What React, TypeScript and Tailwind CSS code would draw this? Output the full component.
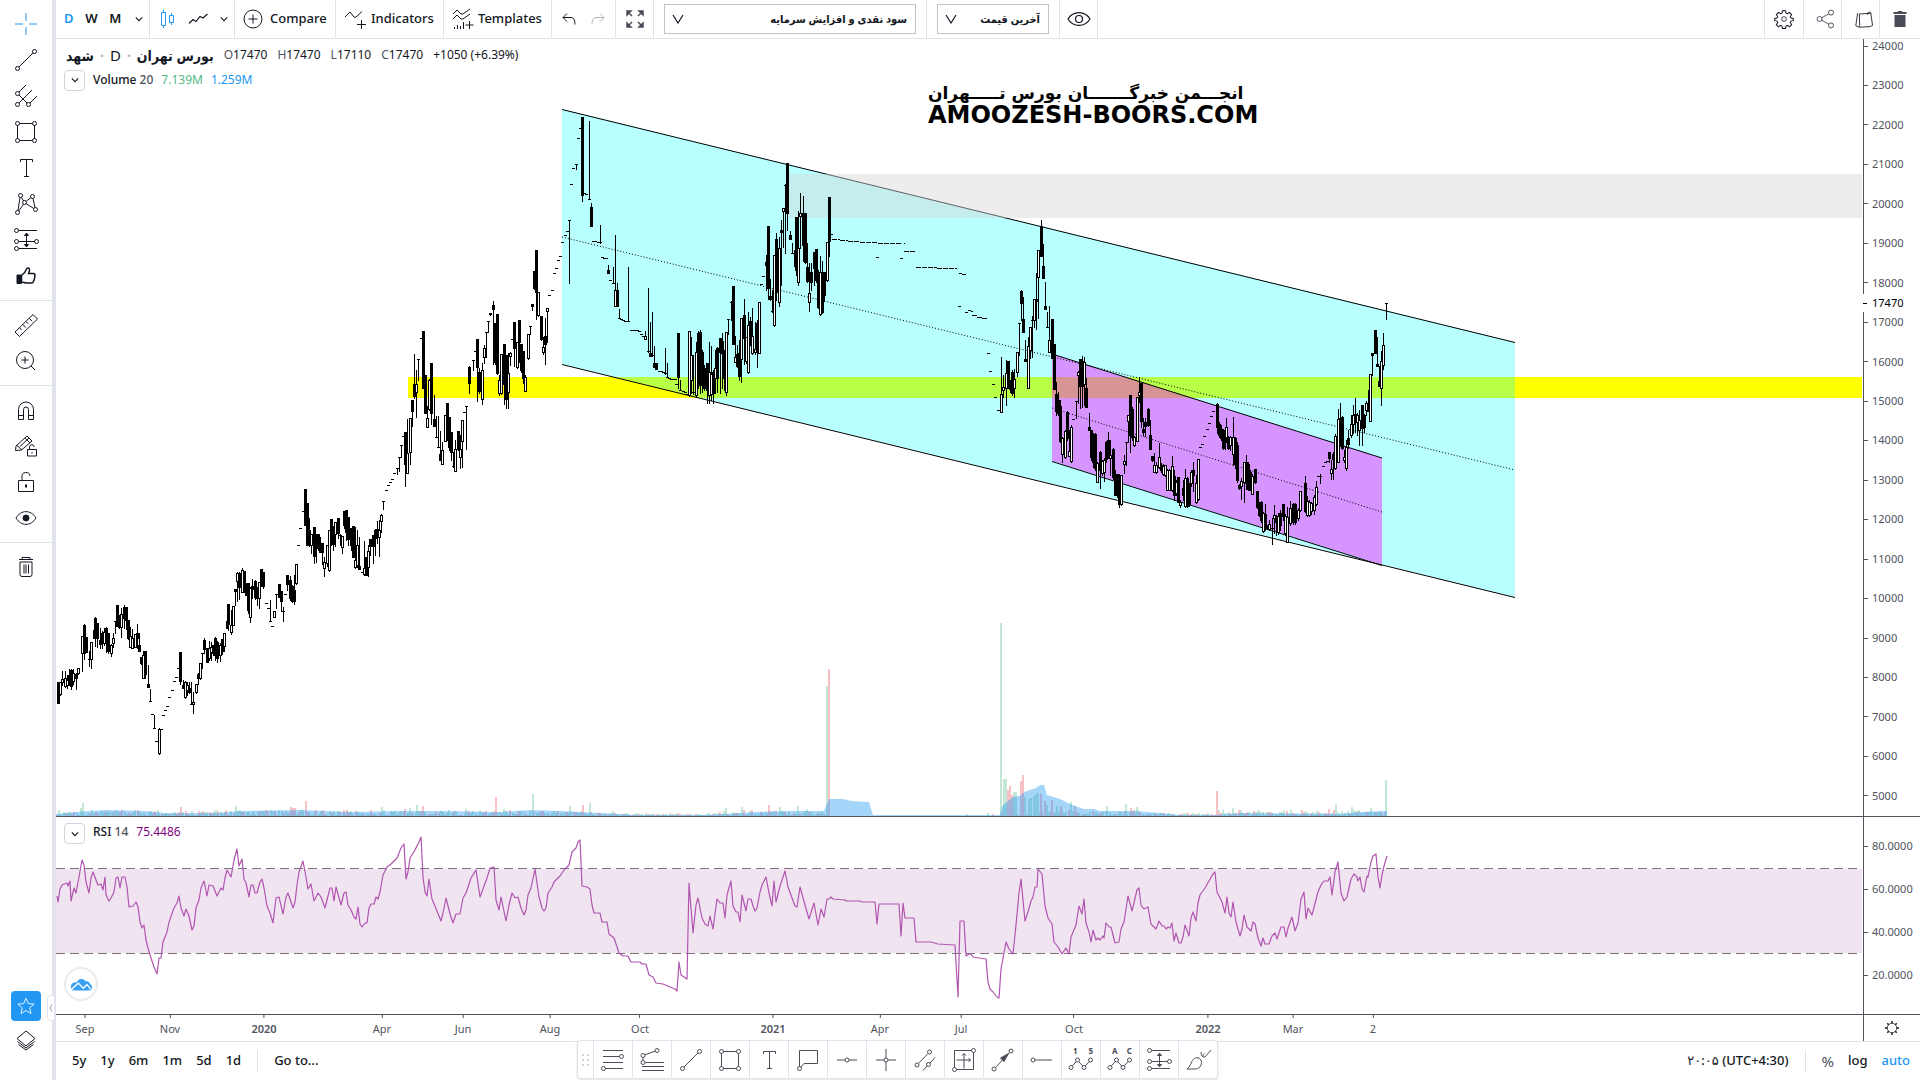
import type { ReactNode } from "react";

// ---------------------------------------------------------------------------
// Series data, in chart units (same units as the viewBox of every pane)
// ---------------------------------------------------------------------------

// x high low top bottom
const FILLED = `58 682 703 682 703|69 669 685 675 680|71 669 689 670 686|76 673 689 674 678|84 624 659 625 653|86 637 652 637 652|94 629 638 630 638|95 617 646 618 638|97 623 647 623 638|100 628 648 640 644|102 631 648 633 643|106 627 652 628 643|108 633 653 633 651|117 605 626 605 626|119 615 628 618 627|124 605 628 607 618|126 607 629 607 620|128 620 639 620 638|137 624 648 633 638|139 633 651 645 651|141 657 664 657 663|145 651 678 651 674|148 665 687 684 687|180 652 684 652 681|183 680 688 685 688|189 682 693 688 692|198 673 684 674 678|204 638 653 640 649|207 648 662 648 662|213 645 655 645 653|215 637 660 638 655|217 641 662 642 658|222 639 654 639 651|227 621 628 621 628|228 604 630 604 624|235 589 605 589 591|239 572 599 573 587|244 571 592 571 592|246 583 595 583 595|248 583 613 583 610|252 579 598 586 589|255 580 599 581 597|257 587 605 587 598|261 569 586 569 585|263 572 588 572 586|279 584 597 584 597|281 591 611 591 601|287 575 590 575 584|290 576 600 580 598|292 585 602 586 601|294 575 604 590 601|305 489 525 489 525|307 503 545 503 545|309 518 546 530 543|314 527 563 527 556|316 534 562 534 548|318 534 550 534 546|320 537 552 543 552|322 543 564 543 552|331 519 545 519 532|333 526 550 528 544|338 518 538 518 533|344 511 528 511 525|346 510 540 510 532|348 517 545 517 539|351 528 550 528 545|353 526 557 526 557|359 537 569 566 569|366 557 575 557 575|370 539 555 539 546|373 535 563 535 546|375 529 555 530 538|377 521 543 529 537|405 432 486 432 464|412 400 426 400 411|414 354 398 384 396|423 331 388 331 388|425 375 413 375 413|431 363 424 363 413|434 395 426 419 426|440 431 460 454 460|447 403 440 403 439|449 417 450 417 447|451 432 460 432 452|458 431 450 431 449|469 366 393 367 383|477 339 401 339 367|479 368 393 372 391|490 313 315 313 314|493 301 364 305 309|495 323 364 323 362|497 314 374 314 373|504 344 404 344 384|506 355 408 355 399|514 322 366 322 348|519 320 362 320 342|521 344 372 344 370|523 351 383 351 378|532 304 310 304 306|534 271 289 271 288|536 250 319 250 292|541 316 340 316 339|545 318 364 336 344|582 117 201 117 195|591 203 226 207 226|608 265 273 270 273|617 283 306 290 306|650 322 356 353 356|654 346 367 363 367|656 363 369 363 369|678 333 388 333 377|698 331 388 333 385|700 330 393 332 370|702 350 392 352 385|704 365 390 368 388|707 363 403 363 390|713 370 403 372 393|717 347 392 348 378|720 338 393 338 352|722 333 388 341 353|724 350 390 352 378|733 286 344 286 344|737 345 367 354 366|739 340 380 353 376|744 299 364 315 338|750 317 345 321 335|757 320 367 323 352|766 255 290 262 265|768 226 299 226 288|770 279 300 296 299|776 233 300 239 292|781 220 285 230 232|787 163 230 163 213|790 231 239 235 239|795 245 270 250 266|796 217 275 217 270|803 196 261 213 245|805 213 263 213 262|807 243 282 267 281|811 263 290 272 282|814 252 285 252 268|816 249 282 249 280|818 270 308 276 307|822 261 313 272 312|824 272 301 272 295|829 197 256 197 241|1008 361 388 361 388|1010 380 392 380 389|1012 370 395 372 393|1021 290 320 291 303|1023 297 332 319 332|1025 340 361 359 361|1036 273 329 299 301|1041 220 256 226 256|1043 244 278 266 278|1045 282 309 306 309|1052 319 358 319 358|1054 344 389 344 389|1056 382 415 394 411|1058 392 415 400 413|1060 400 442 406 441|1067 411 440 412 438|1080 359 408 359 386|1082 356 407 361 386|1086 378 407 388 407|1089 413 430 427 430|1091 430 460 430 457|1093 433 467 438 462|1095 433 470 434 468|1100 451 488 452 470|1106 441 462 442 459|1108 432 458 440 456|1113 448 479 449 477|1115 470 495 475 495|1117 474 497 474 494|1119 474 507 476 504|1130 395 452 395 435|1132 407 440 409 437|1141 383 427 383 421|1143 418 435 429 432|1145 418 436 422 426|1148 408 426 409 425|1150 420 449 435 449|1152 456 461 456 460|1161 463 472 465 470|1174 470 500 476 495|1178 477 502 477 502|1183 480 500 488 495|1187 477 507 478 506|1189 483 506 484 504|1193 462 491 470 475|1217 403 433 404 427|1219 422 437 424 435|1221 425 440 429 438|1223 429 449 430 448|1225 428 449 430 442|1228 436 449 437 448|1235 437 468 438 464|1237 442 482 445 480|1239 484 489 485 488|1246 455 489 462 483|1248 462 490 464 489|1250 470 490 472 490|1255 469 483 469 482|1257 491 508 491 507|1259 502 516 506 515|1261 501 522 502 520|1265 504 530 514 528|1267 525 529 526 528|1276 515 535 518 522|1280 510 530 513 525|1283 504 520 504 516|1293 503 524 504 522|1295 503 524 504 522|1305 476 512 483 511|1329 452 462 452 458|1333 452 479 454 459|1340 403 446 418 445|1342 416 449 417 448|1348 430 448 438 444|1355 398 432 414 418|1362 405 445 405 428|1364 414 432 415 427|1372 353 375 353 355|1375 330 353 330 353|1377 337 366 364 366|1379 366 386 381 386`;

const HOLLOW = `60 682 695 682 694|62 671 685 679 682|65 671 687 678 686|67 675 688 680 685|73 669 684 673 681|78 668 674 668 673|82 636 671 636 653|91 642 668 642 659|104 628 645 632 643|111 644 656 645 653|113 633 647 638 643|121 608 637 614 627|130 627 647 636 647|132 629 648 638 648|135 634 647 634 647|143 651 678 655 678|159 728 754 729 753|185 681 698 682 697|187 682 695 685 690|193 692 713 702 704|196 684 693 684 692|200 663 679 663 678|209 641 660 648 658|211 642 660 647 652|220 643 661 645 655|224 633 651 633 646|231 610 634 625 632|233 606 625 606 625|237 572 601 573 581|242 568 592 570 592|250 587 622 588 617|259 582 608 582 598|274 611 617 611 617|296 564 584 564 583|311 534 553 534 545|324 557 576 562 568|327 545 566 545 563|329 530 571 530 570|335 522 546 522 534|342 536 553 536 547|355 527 568 560 567|357 530 567 545 565|364 541 575 568 574|368 545 576 551 567|379 520 556 530 537|381 514 532 515 521|407 419 473 453 473|410 418 464 418 452|416 370 417 384 392|427 406 427 418 427|429 379 410 380 409|442 442 464 450 464|445 415 441 415 441|455 440 471 449 471|460 435 468 449 457|462 420 467 420 441|482 363 404 370 399|484 345 363 348 357|499 375 395 380 393|501 354 394 354 393|508 353 408 373 392|510 352 365 353 356|517 342 368 342 367|525 375 391 377 391|528 334 359 334 358|538 292 316 292 315|543 337 354 347 352|547 308 342 308 311|615 235 306 290 306|645 331 339 336 339|689 331 396 331 395|691 337 393 355 380|696 342 397 352 395|709 342 403 372 395|711 346 400 374 394|715 350 393 368 378|726 332 395 332 392|735 336 362 357 362|741 318 382 318 359|746 337 363 337 361|748 312 373 325 372|752 308 354 336 353|755 322 354 349 352|759 302 353 302 353|774 255 326 255 325|779 237 306 248 302|783 208 247 208 211|798 211 285 248 282|800 193 248 213 216|809 263 311 293 302|820 256 315 272 314|827 242 281 242 280|1001 357 412 394 412|1003 375 397 387 390|1006 360 405 373 388|1014 369 397 379 388|1017 352 376 352 372|1028 337 388 346 388|1030 327 358 327 350|1034 299 327 299 320|1038 250 318 250 277|1049 306 352 340 352|1062 437 462 438 454|1065 430 458 431 457|1069 430 456 451 456|1071 425 462 427 461|1078 371 403 372 375|1084 357 405 362 384|1097 462 482 463 482|1102 460 475 461 473|1104 458 481 460 472|1110 440 475 455 458|1121 475 505 475 504|1124 455 473 461 464|1128 415 442 415 421|1134 436 446 437 445|1137 397 441 397 441|1139 377 402 392 395|1154 453 472 465 472|1156 462 473 465 472|1159 443 468 457 467|1163 464 475 466 474|1165 465 476 465 475|1167 469 490 470 490|1169 469 490 470 490|1172 456 491 466 490|1176 480 495 482 493|1180 500 507 502 505|1185 469 507 478 506|1191 470 486 472 483|1196 475 503 483 502|1198 459 500 459 499|1226 418 440 427 437|1230 436 450 437 445|1233 417 465 437 454|1241 478 499 481 486|1244 462 502 462 482|1252 474 494 476 494|1263 512 532 513 531|1269 520 530 524 529|1274 505 533 515 518|1278 513 534 516 532|1285 514 535 516 533|1287 507 542 517 542|1290 501 525 508 523|1298 508 520 510 518|1300 491 511 491 510|1307 496 516 501 515|1309 500 516 502 515|1311 502 514 503 511|1314 495 514 497 510|1316 481 505 487 504|1331 460 479 469 473|1335 434 469 436 468|1338 409 462 419 462|1344 450 462 457 460|1346 440 470 447 468|1351 415 437 424 435|1353 405 433 415 424|1357 413 435 415 422|1359 410 445 420 430|1366 401 415 403 410|1370 374 421 374 421|1381 351 405 361 388|1383 333 369 345 365`;

// x high low level, drawn as a wick with a short bar at the level
const DOJI = `89 651 666 659|115 621 633 621|150 689 701 701|152 714 714 714|154 715 728 728|156 741 741 741|161 729 729 729|163 715 715 715|165 710 710 710|167 706 706 706|169 697 697 697|172 690 690 690|174 681 681 681|176 677 677 677|178 668 668 668|191 682 704 704|202 653 668 653|266 603 603 603|268 608 608 608|270 600 621 621|272 626 626 626|276 594 608 594|283 607 621 611|285 594 594 594|298 545 545 545|300 528 528 528|303 511 511 511|340 534 545 535|362 572 572 572|383 501 509 501|386 490 490 490|388 485 485 485|390 482 482 482|392 479 479 479|394 473 473 473|397 468 474 468|399 457 471 457|401 445 457 445|403 436 436 436|418 359 380 359|421 338 338 338|436 416 437 437|438 416 447 447|453 452 467 466|464 412 412 412|466 406 449 406|473 360 370 360|475 351 351 351|486 332 357 332|488 321 332 321|512 339 339 339|530 326 334 326|549 295 295 295|552 290 290 290|554 273 273 273|556 268 268 268|558 260 260 260|560 256 256 256|562 242 242 242|565 235 235 235|567 231 231 231|569 220 283 220|571 184 184 184|573 168 168 168|576 164 169 164|578 138 138 138|580 128 128 128|584 193 193 193|586 194 194 194|589 121 199 199|593 241 241 241|595 241 241 241|598 242 242 242|600 225 243 242|602 257 257 257|604 258 258 258|606 258 258 258|610 280 280 280|613 267 283 283|619 309 318 318|621 319 319 319|623 320 320 320|625 321 321 321|628 267 321 321|631 330 330 330|633 330 330 330|635 330 330 330|637 330 330 330|639 331 331 331|641 334 334 334|643 336 336 336|648 288 352 351|652 312 356 355|659 371 371 371|661 371 371 371|663 372 372 372|665 348 374 373|667 363 377 377|669 378 378 378|671 379 379 379|673 379 379 379|675 379 379 379|676 384 384 384|680 380 390 390|683 391 391 391|685 392 392 392|687 394 394 394|693 355 394 392|728 319 334 319|731 301 320 302|761 284 284 284|763 276 276 276|772 290 312 311|785 184 253 185|792 243 253 253|831 234 234 234|877 257 257 257|901 258 258 258|959 306 306 306|966 312 312 312|988 353 353 353|990 371 371 371|993 384 384 384|995 397 397 397|998 410 410 410|1019 323 355 323|1032 316 357 320|1047 312 327 327|1073 419 419 419|1076 401 418 401|1126 442 465 442|1200 447 447 447|1202 444 444 444|1204 436 436 436|1207 429 429 429|1209 423 423 423|1211 416 416 416|1213 411 411 411|1272 518 544 528|1318 476 476 476|1320 474 483 476|1323 466 466 466|1325 462 462 462|1327 461 461 461|1368 390 411 411|1386 303 319 303`;

// halted sessions, printed as flat runs
const FLAT =
  "M832 239.5H840M840 240.5H848M848 241.5H860M860 242.5H877M878 243.5H902M904 243.5H905M904 251.5H916M916 267.5H937M937 268.5H957M959 273.5H962M962 274.5H966M968 310.5H971M971 311.5H973M972 315.5H977M977 317.5H982M982 318.5H988";

const RSI_LINE =
  "57,896 58,902 60,889 62,885 67,883 68,886 70,881 71,901 74,888 76,893 79,877 82,860 84,865 86,882 89,893 91,878 93,872 96,880 98,885 101,884 103,890 105,877 106,895 109,901 111,898 114,892 116,878 118,877 120,888 122,877 125,877 127,887 129,907 133,906 136,902 138,907 140,922 142,928 144,925 146,940 148,948 151,958 154,967 157,974 159,958 161,958 163,942 167,932 169,922 174,908 177,903 179,896 181,908 184,916 186,909 189,916 192,930 194,926 196,908 199,900 201,888 204,881 207,896 209,885 213,886 217,896 221,888 223,890 225,878 227,870 231,877 234,860 237,849 239,866 242,859 244,879 246,883 249,897 251,885 253,885 255,893 257,893 260,882 262,879 264,888 267,906 270,913 273,923 276,898 279,897 283,914 286,897 288,893 291,902 293,908 295,902 297,885 299,872 303,861 306,877 308,889 311,884 314,901 318,893 321,897 325,908 330,888 332,888 334,901 336,887 341,905 344,893 346,892 348,905 351,910 354,917 356,919 358,907 360,924 362,927 365,923 367,923 369,908 371,904 374,904 376,897 378,899 380,892 383,875 387,867 391,864 397,858 401,848 404,844 406,879 408,872 410,858 415,850 419,842 421,837 423,877 425,892 427,896 429,879 432,899 437,911 441,921 443,913 446,898 450,914 453,923 456,914 460,914 463,898 466,893 471,878 476,870 480,897 487,878 490,868 494,867 496,900 499,910 501,897 506,921 509,905 512,893 515,898 518,897 521,908 524,915 526,910 528,895 531,888 535,869 539,897 542,908 544,911 546,908 548,893 552,887 554,882 560,876 564,870 569,865 572,852 576,848 578,842 580,840 582,886 587,887 590,889 592,905 594,913 600,913 602,922 607,922 609,934 614,938 619,953 623,956 628,956 631,962 640,962 642,964 646,964 649,975 653,977 656,983 663,984 670,987 675,989 677,991 679,962 681,975 687,979 689,883 693,933 696,905 698,898 702,918 705,924 708,926 710,916 713,929 717,899 720,903 723,903 725,918 727,895 731,881 733,906 736,912 738,912 740,922 742,895 746,911 748,899 751,899 753,906 755,911 757,908 760,892 762,885 766,877 769,893 772,906 774,881 776,902 780,886 785,871 788,887 795,906 797,907 800,887 805,905 809,919 814,903 818,925 821,909 824,917 827,899 829,899 831,897 833,899 845,900 846,901 860,901 862,902 875,902 877,924 879,904 899,904 901,936 903,903 905,918 914,918 916,942 931,942 938,944 955,945 958,997 960,921 964,921 966,956 969,954 971,954 973,957 979,958 986,959 988,982 990,989 993,992 997,997 999,998 1001,969 1006,942 1009,949 1013,954 1016,925 1019,893 1021,879 1023,900 1025,921 1028,912 1031,901 1033,897 1035,887 1037,887 1038,869 1042,874 1045,906 1048,918 1052,924 1054,942 1058,947 1062,954 1066,948 1069,954 1071,937 1076,925 1079,906 1082,914 1084,899 1086,923 1089,932 1091,942 1093,930 1096,940 1098,938 1100,940 1103,936 1104,938 1106,923 1109,927 1111,927 1115,943 1119,942 1121,929 1124,922 1128,896 1132,911 1137,890 1139,888 1141,905 1144,909 1148,907 1151,924 1156,929 1159,921 1162,926 1164,926 1166,929 1168,927 1170,928 1172,923 1174,941 1176,933 1179,943 1181,943 1183,937 1185,925 1189,936 1191,918 1193,912 1196,921 1198,903 1200,895 1205,888 1209,881 1213,874 1215,872 1217,892 1222,902 1225,913 1227,897 1229,913 1231,917 1233,902 1236,922 1240,936 1242,929 1244,915 1247,927 1251,931 1253,922 1255,924 1258,938 1261,946 1263,938 1265,944 1269,944 1272,936 1275,933 1277,939 1281,927 1284,927 1286,937 1288,928 1292,917 1295,931 1298,923 1301,899 1304,892 1306,919 1308,908 1312,915 1318,892 1321,885 1324,881 1328,881 1330,877 1332,895 1335,872 1338,862 1341,893 1344,901 1347,897 1351,879 1354,874 1357,877 1358,881 1360,877 1362,889 1364,892 1367,876 1368,877 1371,862 1373,856 1376,854 1378,877 1380,888 1382,875 1384,866 1387,856";

const VOLUME_MA =
  "56,816 56,814 75,812 105,810 145,811 165,813 215,813 240,811 300,810 350,812 400,811 440,811 500,812 530,810 560,811 600,813 640,815 700,815 725,814 755,812 790,811 824,811 829,799 843,799 852,801 869,802 873,815 1000,815 1002,806 1013,797 1020,796 1024,792 1030,790 1036,788 1040,785 1044,785 1047,795 1060,799 1070,804 1078,807 1084,809 1095,809 1099,811 1135,811 1160,813 1180,815 1215,815 1240,813 1340,814 1360,812 1387,811 1387,816";

const GREEN = "#c3e6d5";
const RED = "#f7c1c6";

const VOLUME_SPIKES: [number, number, string][] = [
  [80, 808, GREEN], [82, 803, GREEN], [157, 810, GREEN], [180, 807, RED], [198, 811, RED], [225, 810, RED],
  [235, 806, GREEN], [290, 807, RED], [292, 808, RED], [294, 808, RED], [305, 801, RED], [343, 810, RED],
  [381, 807, GREEN], [404, 809, RED], [409, 808, GREEN], [416, 805, GREEN], [422, 806, RED], [465, 809, GREEN],
  [495, 797, RED], [503, 809, GREEN], [532, 794, GREEN], [569, 806, GREEN], [582, 805, RED], [589, 803, GREEN],
  [612, 811, GREEN], [645, 813, GREEN], [725, 808, GREEN], [741, 807, GREEN], [743, 811, RED], [768, 805, RED],
  [779, 807, GREEN], [797, 806, GREEN], [806, 809, GREEN], [826, 686, GREEN], [828, 669, RED], [966, 814, GREEN],
  [987, 813, GREEN], [992, 814, RED], [1000, 623, GREEN], [1003, 779, GREEN], [1005, 779, GREEN], [1007, 790, RED],
  [1009, 786, RED], [1011, 795, RED], [1013, 792, GREEN], [1015, 792, GREEN], [1020, 781, RED], [1022, 775, RED],
  [1024, 797, GREEN], [1028, 799, GREEN], [1030, 798, GREEN], [1033, 796, GREEN], [1035, 794, GREEN], [1037, 793, GREEN],
  [1040, 794, RED], [1044, 801, RED], [1046, 805, GREEN], [1051, 800, RED], [1056, 806, GREEN], [1060, 806, RED],
  [1070, 802, GREEN], [1074, 806, RED], [1106, 806, GREEN], [1125, 804, GREEN], [1130, 808, RED], [1136, 807, GREEN],
  [1216, 791, RED], [1218, 812, RED], [1232, 808, GREEN], [1262, 812, GREEN], [1328, 809, RED], [1335, 804, GREEN],
  [1341, 811, GREEN], [1351, 807, GREEN], [1358, 810, GREEN], [1370, 808, GREEN], [1385, 780, GREEN],
];

const PRICES = Array.from({ length: 20 }, (_, i) => 24000 - i * 1000);
const RSI_LEVELS = ["80.0000", "60.0000", "40.0000", "20.0000"];

const DATES = [
  { label: "Sep", x: 85 }, { label: "Nov", x: 170 }, { label: "2020", x: 264, bold: true },
  { label: "Apr", x: 382 }, { label: "Jun", x: 463 }, { label: "Aug", x: 550 }, { label: "Oct", x: 640 },
  { label: "2021", x: 773, bold: true }, { label: "Apr", x: 880 }, { label: "Jul", x: 961 }, { label: "Oct", x: 1074 },
  { label: "2022", x: 1208, bold: true }, { label: "Mar", x: 1293 }, { label: "2", x: 1373 },
];

type Candle = { x: number; high: number; low: number; top: number; bottom: number; kind: "filled" | "hollow" | "doji" };

function parse(rows: string, kind: Candle["kind"]): Candle[] {
  return rows.split("|").map((row) => {
    const [x, high, low, top, bottom = top] = row.split(" ").map(Number);
    return { x, high, low, top, bottom, kind };
  });
}

const CANDLES = [...parse(FILLED, "filled"), ...parse(HOLLOW, "hollow"), ...parse(DOJI, "doji")].sort((a, b) => a.x - b.x);

// everyday volume between the spikes
const VOLUME_BASE = Array.from({ length: 610 }, (_, i) => {
  const x = 56 + Math.round(i * 2.18);
  const n = Math.abs(Math.sin(i * 12.9898) * 43758.5453) % 1;
  const quiet = (x > 600 && x < 715) || (x > 1140 && x < 1215);
  return { x, h: 1 + n * (quiet ? 2 : 5), color: Math.abs(Math.sin(i * 7.13)) > 0.55 ? GREEN : RED };
}).filter((b) => (b.x < 826 || b.x > 1000) && b.x < 1386);

// ---------------------------------------------------------------------------
// Icons, all on a 28 unit grid
// ---------------------------------------------------------------------------

function Icon({ children, className = "size-7" }: { children: ReactNode; className?: string }) {
  return (
    <svg viewBox="0 0 28 28" className={`${className} shrink-0`} fill="none" stroke="currentColor" aria-hidden="true">
      {children}
    </svg>
  );
}

const Dot = ({ x, y }: { x: number; y: number }) => <circle cx={x} cy={y} r="2" />;

const icons = {
  cross: <path d="M14 3v8M14 17v8M3 14h8M17 14h8" />,
  trend: <><Dot x={5.5} y={22.5} /><Dot x={22.5} y={5.5} /><path d="M7 21 21 7" /></>,
  pitchfork: <><Dot x={5.5} y={11.5} /><Dot x={5.5} y={22.5} /><Dot x={16.5} y={22.5} /><path d="M7 10l7-7M7 21 20 8M18 21l7-7M7 13l8 8" /></>,
  rect: <><Dot x={5.5} y={5.5} /><Dot x={22.5} y={5.5} /><Dot x={5.5} y={22.5} /><Dot x={22.5} y={22.5} /><path d="M7.5 5.5h13M7.5 22.5h13M5.5 7.5v13M22.5 7.5v13" /></>,
  text: <path d="M8.5 8V5.5h12V8M14.5 5.5v17M12 22.5h5" />,
  xabcd: <><Dot x={5.5} y={22.5} /><Dot x={8.5} y={5.5} /><Dot x={12.5} y={12.5} /><Dot x={20.5} y={6.5} /><Dot x={23.5} y={19.5} /><path d="M6 20.500 8 7.500M9.500 7.500l2 3.500M14.200 11.200l4.700-3.500M6.700 21l5-7M14.300 13.800l7.500 4.700M21 8.500l2 9" /></>,
  forecast: <><Dot x={4.5} y={4.5} /><Dot x={4.5} y={15.5} /><Dot x={24.5} y={15.5} /><Dot x={4.5} y={22.5} /><path d="M6.500 4.500h18.500M6.500 15.500h16M6.500 22.500h18.500M14.500 8v12" /><path d="M12.500 9.500h4l-2-2.500zM12.500 18.500h4l-2 2.500z" fill="currentColor" /></>,
  thumb: <><path d="M9.500 13.500c3-2 4-3.500 5-6.500.5-1.600 3-1.500 3 .8 0 1.500-.6 2.700-.9 3.700h5c1.500 0 1.700 1.500 1 2.500.6.800.3 2-.3 2.500.3 1-.1 1.800-.8 2.300.1 1.200-.5 2.200-2 2.200h-5c-2 0-3-1-5-1z" strokeWidth="1.500" /><path d="M5 13h4.500v8.500H5z" fill="currentColor" /></>,
  ruler: <path d="M3 21 21 3.500 25.500 8 7.500 25.500zM7.500 16.800l2.200 2.200M10.800 13.500l3 3M14 10.500l2.200 2.200M17.200 7.300l3 3" />,
  zoomIn: <><circle cx="13" cy="13" r="8.500" /><path d="M9.500 13h7M13 9.500v7M19 19l4 4" /></>,
  magnet: <path d="M6.500 23.500v-10a7.500 7.500 0 0 1 15 0v10h-5v-10a2.500 2.500 0 0 0-5 0v10zM6.500 19.500h5M16.500 19.500h5" />,
  pencil: <><path d="M3.500 18.500 4 14l11-10 5 5-10.500 9zM5 13.500l5 4.500M8 14.500 17 6M13 6l5 5" /><path d="M15.500 17.500h9v6.500h-9zM17.500 17.500V15a2.300 2.300 0 0 1 4.600 0M20 20v1.500" /></>,
  lock: <><path d="M6.500 12.500h15v11h-15zM10 12.500V9a4 4 0 0 1 8-1" /><path d="M14 16.500v3" strokeWidth="2" /></>,
  eye: <><path d="M4 14c5-8.500 15-8.500 20 0-5 8.500-15 8.500-20 0z" /><circle cx="14" cy="14" r="3" fill="currentColor" /></>,
  trash: <path d="M7 6.500h14M10 6.500v-2h8v2M8 9v12.500q0 2 2 2h8q2 0 2-2V9zM12 11.500v9M14 11.500v9M16.500 11.500v9" />,
  star: <path d="m14 5 2.700 6.200 6.800.6-5.200 4.400 1.600 6.600-5.900-3.600-5.900 3.600 1.600-6.600-5.200-4.400 6.800-.6z" />,
  layers: <path d="m14 4 9 7.500-9 7.500-9-7.500zM5.500 14.500l8.500 6.500 8.500-6.500M6.500 17.500l7.500 5.500 7.500-5.500" />,
  fibLevels: <><Dot x={22.5} y={10.5} /><Dot x={4.5} y={22.5} /><path d="M4 4.500h20M4 10.500h16.500M4 16.500h20M6.500 22.500H24" /></>,
  fibExt: <><Dot x={5} y={9.500} /><Dot x={19} y={4.500} /><Dot x={5} y={16.500} /><path d="M7 8.800 17 5.200M5 11.500v3M7 16.500h19M4 20.500h22M4 24.500h22" /></>,
  callout: <><Dot x={5.5} y={22.500} /><path d="M5.500 20.500v-16h18v13H10l-3 3.500" /></>,
  hline: <><Dot x={14} y={14} /><path d="M4 14h8M16 14h8" /></>,
  crossline: <><Dot x={14} y={14} /><path d="M4 14h8M16 14h8M14 3v9M14 16v9" /></>,
  parallel: <><Dot x={6} y={19} /><Dot x={18.500} y={6} /><Dot x={17.500} y={18.500} /><path d="M7.500 17.500l9.500-10M12 24.500l4-4.500M19 17l5-5.500" /></>,
  range: <><Dot x={4.500} y={23.500} /><Dot x={23.500} y={4.500} /><path d="M21.500 4.500h-17v17M6.500 23.500h17v-17M14 7.500v15M6.500 14h14M12 9.500l2-2 2 2M18.500 12l2 2-2 2" /></>,
  arrow: <><Dot x={5} y={23} /><Dot x={22} y={5} /><path d="M6.500 21.500 20.500 6.500" /><path d="M19.500 7.500l-8 4.500 3.500 3.500z" fill="currentColor" /></>,
  ray: <><Dot x={5} y={14} /><path d="M7 14h17" /></>,
  brush: <path d="M3 23h8c4 0 6.500-3 6.500-6.500 0-4-4-6-7-4-3.500 2-3 7-7.500 10.500zM17 6c0 3 1.500 6 4 5l6-7M20.500 7.500c-1.500 1-2 2-1.500 3.500" />,
  gear: <><path d="M12 3.500h4l.5 3 2 .8 2.500-1.800 2.800 2.800-1.800 2.500.8 2 3 .5v2.800l-3 .6-.8 2 1.800 2.500-2.800 2.800-2.500-1.800-2 .8-.5 3h-4l-.5-3-2-.8-2.500 1.800-2.800-2.800 1.800-2.500-.8-2-3-.6v-2.800l3-.5.8-2L4.200 8.300 7 5.500l2.500 1.800 2-.8z" strokeWidth="1.300" /><circle cx="14" cy="14" r="3" /></>,
  share: <><circle cx="5" cy="14" r="3.500" /><circle cx="21" cy="5" r="3.500" /><circle cx="21" cy="23" r="3.500" /><path d="m8 12.300 10-5.600M8 15.700l10 5.600" /></>,
  picture: <path d="M5 6 2.500 23.500l5 2 15-.8 3.500-1.700-2.500-17-16 1 .5 18M19 8c-1-4.500 5-5 4.500-1" strokeWidth="1.200" />,
  smallGear: <><circle cx="14" cy="14" r="6" /><path d="M14 5v3M14 20v3M5 14h3M20 14h3M8 8l1.800 1.800M18.200 18.200 20 20M8 20l1.800-1.800M18.200 9.800 20 8" strokeWidth="1.800" /></>,
};

function Wave({ from, to }: { from: string; to: string }) {
  return (
    <span className="flex w-7 flex-col">
      <span className="flex justify-between pl-1.5 pr-0.5 text-[8px] font-bold leading-[10px]">
        <span>{from}</span>
        <span>{to}</span>
      </span>
      <svg viewBox="0 0 28 18" className="h-[18px] w-7" fill="none" stroke="currentColor" aria-hidden="true">
        <Dot x={4} y={11.500} /><Dot x={10.500} y={4} /><Dot x={17} y={11.500} /><Dot x={23.500} y={4} />
        <path d="M5.300 9.800l4-4.300M11.800 5.800l4 4.200M18.300 9.800l4-4.300" />
      </svg>
    </span>
  );
}

function Chevron({ className = "h-2 w-2", stroke = 1.4 }: { className?: string; stroke?: number }) {
  return (
    <svg viewBox="0 0 10 6" className={className} fill="none" stroke="currentColor" strokeWidth={stroke} aria-hidden="true">
      <path d="m1 1 4 4 4-4" />
    </svg>
  );
}

function SelectChevron() {
  return (
    <svg viewBox="0 0 12 10" className="pointer-events-none absolute left-2 top-2.5 h-2.5 w-3" fill="none" stroke="currentColor" strokeWidth="1.200" aria-hidden="true">
      <path d="m1 1 5 8 5-8" />
    </svg>
  );
}

// ---------------------------------------------------------------------------
// Toolbars
// ---------------------------------------------------------------------------

function ToolGroup({ children, className }: { children: ReactNode; className: string }) {
  return <div className={`flex h-full shrink-0 items-center border-r border-[#e0e3eb] ${className}`}>{children}</div>;
}

function TopBar() {
  return (
    <header className="flex h-[39px] shrink-0 items-center border-b border-[#e0e3eb] text-[13px] font-medium">
      <ToolGroup className="w-[94px] justify-between pl-2 pr-1.5">
        <button className="font-semibold text-[#2196f3]">D</button>
        <button className="font-semibold">W</button>
        <button className="pr-0.5 font-semibold">M</button>
        <button aria-label="More intervals"><Chevron /></button>
      </ToolGroup>
      <ToolGroup className="w-[85px] justify-between pl-2.5 pr-1.5">
        <button aria-label="Candles" className="text-[#2196f3]">
          <svg viewBox="0 0 16 20" className="h-5 w-4" fill="none" stroke="currentColor" aria-hidden="true">
            <path d="M1.500 3.500h4v13h-4zM3.500 1v2.500M3.500 16.500V19M9.500 6.500h4v7h-4zM11.500 4v2.500M11.500 13.500V16" />
          </svg>
        </button>
        <button aria-label="Line">
          <svg viewBox="0 0 20 12" className="h-3 w-5" fill="none" stroke="currentColor" strokeWidth="1.200" aria-hidden="true">
            <path d="m1 10.500 4-4 3 2 4-5 3 1.500 4.500-4" />
          </svg>
        </button>
        <button aria-label="More styles"><Chevron /></button>
      </ToolGroup>
      <ToolGroup className="w-[101px]">
        <button className="flex items-center gap-[7px] pl-2">
          <svg viewBox="0 0 20 20" className="size-5" fill="none" stroke="currentColor" aria-hidden="true">
            <circle cx="10" cy="10" r="9" /><path d="M10 5.500v9M5.500 10h9" />
          </svg>
          Compare
        </button>
      </ToolGroup>
      <ToolGroup className="w-[108px]">
        <button className="flex items-center gap-1 pl-2">
          <svg viewBox="0 0 23 20" className="h-5 w-[23px]" fill="none" stroke="currentColor" aria-hidden="true">
            <path d="m1 8 5-5 4 5q1 1 2 0l6-5.500M17.500 11v9M13 15.500h9" />
          </svg>
          Indicators
        </button>
      </ToolGroup>
      <ToolGroup className="w-[108px]">
        <button className="flex items-center gap-1 pl-2">
          <svg viewBox="0 0 22 22" className="h-[22px] w-[22px]" fill="none" stroke="currentColor" aria-hidden="true">
            <path d="m1 6 4-4 4 4h2l7-5M1 11l4-4 4 4h2l7-5M17.500 13v8M13.500 17h8M2.500 19v2M5.500 17v4M8.500 18v3M11.500 14v7" />
          </svg>
          Templates
        </button>
      </ToolGroup>
      <ToolGroup className="w-[64px] justify-between px-2.5">
        <button aria-label="Undo">
          <svg viewBox="0 0 14 12" className="h-3 w-3.5" fill="none" stroke="currentColor" aria-hidden="true">
            <path d="M5 .500 1 4.500l4 4M1 4.500h8q4 0 4 7" />
          </svg>
        </button>
        <button aria-label="Redo" className="text-[#b2b5be]">
          <svg viewBox="0 0 14 12" className="h-3 w-3.5" fill="none" stroke="currentColor" aria-hidden="true">
            <path d="m9 .500 4 4-4 4M13 4.500H5q-4 0-4 7" />
          </svg>
        </button>
      </ToolGroup>
      <ToolGroup className="w-[38px] justify-center">
        <button aria-label="Fullscreen" className="text-[#4a4d57]">
          <svg viewBox="0 0 18 18" className="size-[18px]" fill="currentColor" stroke="currentColor" strokeWidth="1.500" aria-hidden="true">
            <path d="M1 1h4L1 5zM17 1h-4l4 4zM1 17h4l-4-4zM17 17h-4l4-4zM3 3l3 3M15 3l-3 3M3 15l3-3M15 15l-3-3" />
          </svg>
        </button>
      </ToolGroup>
      <ToolGroup className="w-[273px] px-2.5">
        <div dir="rtl" className="relative w-full">
          <select aria-label="تعدیل قیمت" className="h-[30px] w-full appearance-none border border-[#c4c4c4] bg-white px-2 font-['Noto_Sans','DejaVu_Sans_Condensed',sans-serif] text-[11px] font-bold">
            <option>سود نقدی و افزایش سرمایه</option>
          </select>
          <SelectChevron />
        </div>
      </ToolGroup>
      <ToolGroup className="w-[133px] px-2.5">
        <div dir="rtl" className="relative w-full">
          <select aria-label="نوع قیمت" className="h-[30px] w-full appearance-none border border-[#c4c4c4] bg-white px-2 font-['Noto_Sans','DejaVu_Sans_Condensed',sans-serif] text-[11px] font-bold">
            <option>آخرین قیمت</option>
          </select>
          <SelectChevron />
        </div>
      </ToolGroup>
      <ToolGroup className="w-[38px] justify-center">
        <button aria-label="Visibility">
          <svg viewBox="0 0 24 16" className="h-4 w-6" fill="none" stroke="currentColor" strokeWidth="1.200" aria-hidden="true">
            <path d="M1 8C6-.500 18-.500 23 8c-5 8.500-17 8.500-22 0z" /><circle cx="12" cy="8" r="3.500" />
          </svg>
        </button>
      </ToolGroup>
      <div className="ml-auto flex h-full">
        <button aria-label="Settings" className="flex w-[39px] items-center justify-center border-l border-[#e0e3eb]"><Icon className="size-[22px]">{icons.gear}</Icon></button>
        <button aria-label="Share" className="flex w-[38px] items-center justify-center border-l border-[#e0e3eb] pl-1.5"><Icon className="size-5">{icons.share}</Icon></button>
        <button aria-label="Snapshot" className="flex w-[38px] items-center justify-center border-l border-[#e0e3eb] pl-1.5"><Icon className="size-5">{icons.picture}</Icon></button>
        <button aria-label="Delete" className="flex w-[41px] items-center justify-center border-l border-[#e0e3eb] text-[#4a4d57]">
          <svg viewBox="0 0 14 16" className="h-4 w-3.5" fill="currentColor" aria-hidden="true">
            <path d="M1.500 4h11v12h-11zM.500 1h4l.5-1h4l.5 1h4v2H.500z" />
          </svg>
        </button>
      </div>
    </header>
  );
}

const SIDE_GROUPS: { label: string; icon: ReactNode }[][] = [
  [
    { label: "Cross", icon: icons.cross },
    { label: "Trend line", icon: icons.trend },
    { label: "Pitchfork", icon: icons.pitchfork },
    { label: "Rectangle", icon: icons.rect },
    { label: "Text", icon: icons.text },
    { label: "Patterns", icon: icons.xabcd },
    { label: "Forecasting", icon: icons.forecast },
    { label: "Icons", icon: icons.thumb },
  ],
  [
    { label: "Measure", icon: icons.ruler },
    { label: "Zoom in", icon: icons.zoomIn },
  ],
  [
    { label: "Magnet", icon: icons.magnet },
    { label: "Stay in drawing mode", icon: icons.pencil },
    { label: "Lock drawings", icon: icons.lock },
    { label: "Hide drawings", icon: icons.eye },
  ],
  [{ label: "Remove drawings", icon: icons.trash }],
];

function SideBar() {
  return (
    <aside className="relative flex w-14 shrink-0 flex-col border-r-4 border-[#e0e3eb] pt-1.5">
      {SIDE_GROUPS.map((group, i) => (
        <div key={i} className={i ? "mt-1.5 border-t border-[#e0e3eb] pt-1.5" : ""}>
          {group.map((tool) => (
            <button
              key={tool.label}
              aria-label={tool.label}
              className={`flex h-9 w-full items-center justify-center ${tool.label === "Cross" ? "text-[#2196f3]" : ""}`}
            >
              <Icon>{tool.icon}</Icon>
            </button>
          ))}
        </div>
      ))}
      <div className="mt-auto flex flex-col items-center gap-1.5 pb-[25px]">
        <button aria-label="Favorites" className="flex size-[30px] items-center justify-center rounded bg-[#2196f3] text-white">
          <Icon className="size-6">{icons.star}</Icon>
        </button>
        <button aria-label="Object tree"><Icon className="size-7">{icons.layers}</Icon></button>
      </div>
      <button aria-label="Collapse toolbar" className="absolute -right-[3px] bottom-[59px] flex h-[26px] w-2 items-center justify-center rounded-l border border-[#e0e3eb] bg-white text-[#9598a1]">
        <svg viewBox="0 0 4 8" className="h-2 w-1" fill="none" stroke="currentColor" aria-hidden="true"><path d="M3 .500 1 4l2 3.500" /></svg>
      </button>
    </aside>
  );
}

// ---------------------------------------------------------------------------
// Panes
// ---------------------------------------------------------------------------

function PriceChart() {
  return (
    <svg viewBox="56 39 1807 777" preserveAspectRatio="none" className="absolute inset-0 h-full w-full" aria-hidden="true">
      <g shapeRendering="crispEdges">
        {VOLUME_BASE.map((b) => <rect key={b.x} x={b.x} y={816 - b.h} width="2" height={b.h} fill={b.color} />)}
        {VOLUME_SPIKES.map(([x, y, color]) => <rect key={x} x={x} y={y} width="2" height={816 - y} fill={color} />)}
      </g>
      <polygon points={VOLUME_MA} fill="#2196f3" fillOpacity="0.4" />

      <rect x="408" y="377" width="1454" height="21" fill="#ffff00" />
      <polygon points="562,109 1515,342 1515,597 562,364" fill="#00ffff" fillOpacity="0.28" />
      <polygon points="1052,354 1382,458 1382,565 1052,461" fill="#ff00ff" fillOpacity="0.42" />
      <path d="M562 109.500 1515 342.500M562 364.500 1515 597.500M1052 354 1382 458M1052 461.500 1382 565.500" stroke="#000" fill="none" />
      <path d="M562 237 1515 470M1052 408 1382 512" stroke="#000" strokeDasharray="1 2" fill="none" />
      <rect x="787" y="174" width="1075" height="44" fill="#d7d7d7" fillOpacity="0.45" />

      <path d={FLAT} stroke="#000" strokeDasharray="5 1" shapeRendering="crispEdges" />
      <g shapeRendering="crispEdges">
        {CANDLES.map((c) => (
          <g key={`${c.x}-${c.kind}`}>
            <rect x={c.x} y={c.high} width="1" height={c.low - c.high + 1} />
            {c.kind === "doji" && <rect x={c.x - 1} y={c.top} width="3" height="1" />}
            {c.kind !== "doji" && <rect x={c.x - 1} y={c.top} width="3" height={c.bottom - c.top + 1} />}
            {c.kind === "hollow" && <rect x={c.x} y={c.top + 1} width="1" height={Math.max(1, c.bottom - c.top - 1)} fill="#fff" />}
          </g>
        ))}
      </g>
    </svg>
  );
}

function RsiChart() {
  return (
    <svg viewBox="56 817 1807 197" preserveAspectRatio="none" className="absolute inset-0 h-full w-full" aria-hidden="true">
      <rect x="56" y="869" width="1806" height="84" fill="#f1e4f1" />
      <path d="M56 868.500H1862M56 953.500H1862" stroke="#7d737d" strokeDasharray="9 5" />
      <polyline points={RSI_LINE} fill="none" stroke="#b055b0" strokeWidth="1.200" strokeLinejoin="round" />
    </svg>
  );
}

function CollapseButton({ label }: { label: string }) {
  return (
    <button aria-label={label} className="flex size-[21px] items-center justify-center rounded-sm border border-[#d1d4dc] bg-white">
      <Chevron className="h-2 w-2" />
    </button>
  );
}

function Legend() {
  return (
    <div className="relative flex flex-col items-start pl-2 pt-1">
      <div className="flex h-6 items-center gap-2.5 text-[12px]">
        <h1 className="flex items-center gap-1.5 pl-0.5 font-['Noto_Sans','DejaVu_Sans_Condensed',sans-serif] text-[14px] font-bold">
          <span>شهد</span>
          <span className="text-[#b2b5be]">·</span>
          <span className="text-[15px] font-normal">D</span>
          <span className="text-[#b2b5be]">·</span>
          <span>بورس تهران</span>
        </h1>
        <span><span className="text-[#50535e]">O</span>17470</span>
        <span><span className="text-[#50535e]">H</span>17470</span>
        <span><span className="text-[#50535e]">L</span>17110</span>
        <span><span className="text-[#50535e]">C</span>17470</span>
        <span>+1050 (+6.39%)</span>
      </div>
      <div className="flex h-6 items-center gap-2 pt-0.5 text-[12px]">
        <CollapseButton label="Collapse volume" />
        <span className="font-medium">Volume <span className="text-[#50535e]">20</span></span>
        <span className="text-[#53b987]">7.139M</span>
        <span className="text-[#2196f3]">1.259M</span>
      </div>
    </div>
  );
}

function PricePane() {
  return (
    <section className="flex min-h-0 flex-1">
      <div className="relative min-w-0 flex-1">
        <PriceChart />
        <Legend />
        <div className="absolute left-[872px] top-[44px] font-['DejaVu_Sans',sans-serif] font-bold text-black">
          <p dir="rtl" className="text-left text-[17px] leading-5">انجـــمن خبرگـــــــان بورس تـــــهران</p>
          <p className="text-[24px] leading-6">AMOOZESH-BOORS.COM</p>
        </div>
      </div>
      <div className="relative w-[57px] border-l border-[#50535e] text-[11px] text-[#50535e]">
        <ul className="flex h-full flex-col justify-between pb-5 pt-[7px]">
          {PRICES.map((p) => (
            <li key={p} className="flex h-0 items-center gap-1">
              <span className="h-px w-1 bg-[#50535e]" />
              {p}
            </li>
          ))}
        </ul>
        <div className="absolute -left-px top-[255px] flex h-[18px] w-[57px] items-center gap-[5px] bg-white text-black">
          <span className="h-px w-1 bg-black" />
          17470
        </div>
      </div>
    </section>
  );
}

function RsiPane() {
  return (
    <section className="flex h-[198px] shrink-0 border-t border-[#50535e]">
      <div className="relative min-w-0 flex-1">
        <RsiChart />
        <div className="relative flex items-start gap-2 pl-2 pt-1.5 text-[12px] leading-[18px]">
          <CollapseButton label="Collapse RSI" />
          <span className="font-medium">RSI <span className="text-[#50535e]">14</span></span>
          <span className="text-[#800080]">75.4486</span>
        </div>
        <div className="absolute bottom-[13px] left-2 flex size-[34px] items-center justify-center rounded-full border-2 border-[#ececec] bg-white">
          <svg viewBox="0 0 24 14" className="h-[13px] w-[22px]" aria-hidden="true">
            <path d="M4 13.500h16.500a3.500 3.500 0 0 0 1.500-6.700C21.500 4 19 3 17 3.500 15 0 9 0 7.500 4.500 3 4 .500 7 1 10c.3 2 1.500 3.500 3 3.500z" fill="#38a0f0" />
            <path d="m1.500 12.500 7.500-7 5.500 5.500 4-4 4 5" stroke="#fff" strokeWidth="1.500" fill="none" />
          </svg>
        </div>
      </div>
      <ul className="flex w-[57px] flex-col justify-between border-l border-[#50535e] pb-[39px] pt-[29px] text-[11px] text-[#50535e]">
        {RSI_LEVELS.map((level) => (
          <li key={level} className="flex h-0 items-center gap-1">
            <span className="h-px w-1 bg-[#50535e]" />
            {level}
          </li>
        ))}
      </ul>
    </section>
  );
}

function TimeAxis() {
  return (
    <div className="flex h-7 shrink-0 border-y border-t-[#50535e] border-b-[#e0e3eb] text-[11px] text-[#50535e]">
      <div className="relative flex-1">
        {DATES.map((d) => (
          <div
            key={d.x}
            className="absolute top-0 flex -translate-x-1/2 flex-col items-center"
            style={{ left: `${((d.x - 56) / 1807) * 100}%` }}
          >
            <span className="h-[3px] w-px bg-[#50535e]" />
            <span className={`leading-[22px] ${d.bold ? "font-semibold" : ""}`}>{d.label}</span>
          </div>
        ))}
      </div>
      <button aria-label="Scale settings" className="flex w-[57px] items-center justify-center border-l border-[#50535e] text-[#131722]">
        <Icon className="size-[22px]">{icons.smallGear}</Icon>
      </button>
    </div>
  );
}

const FAVORITES: { label: string; icon: ReactNode }[] = [
  { label: "Fib retracement", icon: <Icon>{icons.fibLevels}</Icon> },
  { label: "Fib extension", icon: <Icon>{icons.fibExt}</Icon> },
  { label: "Trend line", icon: <Icon>{icons.trend}</Icon> },
  { label: "Rectangle", icon: <Icon>{icons.rect}</Icon> },
  { label: "Text", icon: <Icon>{icons.text}</Icon> },
  { label: "Callout", icon: <Icon>{icons.callout}</Icon> },
  { label: "Horizontal line", icon: <Icon>{icons.hline}</Icon> },
  { label: "Cross line", icon: <Icon>{icons.crossline}</Icon> },
  { label: "Parallel channel", icon: <Icon>{icons.parallel}</Icon> },
  { label: "Date and price range", icon: <Icon>{icons.range}</Icon> },
  { label: "Arrow", icon: <Icon>{icons.arrow}</Icon> },
  { label: "Horizontal ray", icon: <Icon>{icons.ray}</Icon> },
  { label: "Elliott impulse wave", icon: <Wave from="1" to="5" /> },
  { label: "Elliott correction wave", icon: <Wave from="A" to="C" /> },
  { label: "Long position", icon: <Icon>{icons.forecast}</Icon> },
  { label: "Brush", icon: <Icon>{icons.brush}</Icon> },
];

function FavoritesBar() {
  return (
    <div className="absolute -top-0.5 left-[521px] flex h-[39px] rounded border border-[#e0e3eb] bg-white text-[#4a4d57] shadow">
      <div className="flex w-[15px] items-center justify-center">
        <span className="grid grid-cols-2 gap-[3px]">
          {Array.from({ length: 6 }, (_, i) => <i key={i} className="size-0.5 bg-[#d1d4dc]" />)}
        </span>
      </div>
      {FAVORITES.map((f) => (
        <button key={f.label} aria-label={f.label} className="flex w-[39px] items-center justify-center border-l border-[#e0e3eb]">
          {f.icon}
        </button>
      ))}
    </div>
  );
}

function BottomBar() {
  return (
    <footer className="relative flex h-[38px] shrink-0 items-center text-[13px] font-medium">
      <nav className="flex items-center gap-3.5 pl-4">
        {["5y", "1y", "6m", "1m", "5d", "1d"].map((r) => <button key={r}>{r}</button>)}
      </nav>
      <span className="mx-4 h-[22px] w-px bg-[#e0e3eb]" />
      <button>Go to...</button>
      <FavoritesBar />
      <div className="ml-auto flex items-center pr-2.5">
        <button dir="ltr">۲۰:۰۵ (UTC+4:30)</button>
        <span className="mx-4 h-[22px] w-px bg-[#e0e3eb]" />
        <button className="text-[15px] font-normal text-[#50535e]">%</button>
        <button className="ml-3.5">log</button>
        <button className="ml-3.5 text-[#2196f3]">auto</button>
      </div>
    </footer>
  );
}

export default function App() {
  return (
    <div className="flex h-screen overflow-hidden bg-white font-['Noto_Sans','DejaVu_Sans',sans-serif] text-[#131722]">
      <SideBar />
      <div className="flex min-w-0 flex-1 flex-col">
        <TopBar />
        <PricePane />
        <RsiPane />
        <TimeAxis />
        <BottomBar />
      </div>
    </div>
  );
}
